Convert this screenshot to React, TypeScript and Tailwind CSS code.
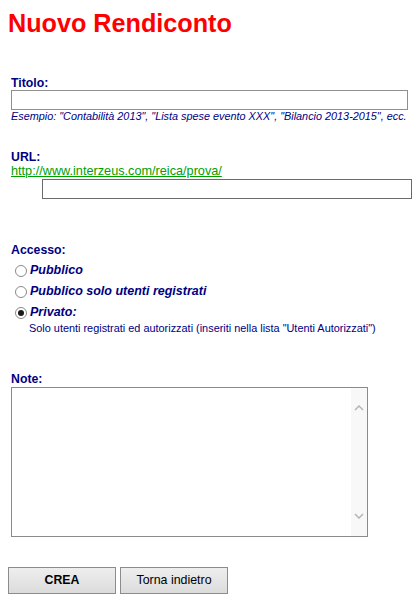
import React from "react";

function Radio({ checked }: { checked?: boolean }) {
  return (
    <span className="ml-[4px] mr-[3px] flex h-[12px] w-[12px] shrink-0 items-center justify-center rounded-full border border-[#8a8a8a] bg-white">
      {checked && <span className="h-[6px] w-[6px] rounded-full bg-[#1a1a1a]" />}
    </span>
  );
}

export default function App() {
  return (
    <div
      className="min-h-[611px] w-[420px] bg-white"
      style={{ fontFamily: '"Liberation Sans", Arial, sans-serif' }}
    >
      <h1 className="pl-[8px] pt-[9px] text-[25.2px] font-bold leading-[28px] text-[#ff0000]">
        Nuovo Rendiconto
      </h1>

      <div className="pl-[11px]">
        <div className="mt-[39px] text-[12.3px] font-bold leading-[14px] text-[#000080]">Titolo:</div>
        <input
          type="text"
          className="block h-[20px] w-[397px] border border-[#8f8f8f] bg-white outline-none"
        />
        <div className="text-[10.85px] italic leading-[13px] text-[#000080]">
          Esempio: "Contabilità 2013", "Lista spese evento XXX", "Bilancio 2013-2015", ecc.
        </div>

        <div className="mt-[27px] text-[12.3px] font-bold leading-[14px] text-[#000080]">URL:</div>
        <div className="text-[12.7px] leading-[14px] text-[#00a000] underline">
          http://www.interzeus.com/reica/prova/
        </div>
        <input
          type="text"
          className="ml-[31px] mt-[1px] block h-[20px] w-[370px] border border-[#6a6a6a] bg-white outline-none"
        />

        <div className="mt-[44px] text-[12.3px] font-bold leading-[14px] text-[#000080]">Accesso:</div>
        <div className="mt-[3px] flex h-[21px] items-center">
          <Radio />
          <span className="text-[12.5px] font-bold italic text-[#000080]">Pubblico</span>
        </div>
        <div className="flex h-[21px] items-center">
          <Radio />
          <span className="text-[12.5px] font-bold italic text-[#000080]">Pubblico solo utenti registrati</span>
        </div>
        <div className="flex h-[21px] items-center">
          <Radio checked />
          <span className="text-[12.5px] font-bold italic text-[#000080]">Privato:</span>
        </div>
        <div className="-mt-px ml-[18px] text-[10.9px] leading-[13px] text-[#000080]">
          Solo utenti registrati ed autorizzati (inseriti nella lista "Utenti Autorizzati")
        </div>

        <div className="mt-[37px] text-[12.3px] font-bold leading-[14px] text-[#000080]">Note:</div>
        <div className="mt-[1px] flex h-[150px] w-[357px] border border-[#8a8a8a] bg-white">
          <textarea className="h-full flex-1 resize-none border-0 bg-white outline-none" />
          <div className="flex w-[16px] flex-col items-center justify-between bg-[#f8f8f8] py-[17px]">
            <svg width="10" height="6" viewBox="0 0 10 6">
              <path d="M1 5 L5 1 L9 5" fill="none" stroke="#b5b5b5" strokeWidth="1.5" />
            </svg>
            <svg width="10" height="6" viewBox="0 0 10 6">
              <path d="M1 1 L5 5 L9 1" fill="none" stroke="#b5b5b5" strokeWidth="1.5" />
            </svg>
          </div>
        </div>

        <div className="-ml-[3px] mt-[30px] flex gap-[4px]">
          <button className="flex h-[27px] w-[108px] items-center justify-center border border-[#8c8c8c] bg-linear-to-b from-[#eeeeee] to-[#dcdcdc] text-[12.3px] font-bold text-black">
            CREA
          </button>
          <button className="flex h-[27px] w-[108px] items-center justify-center border border-[#8c8c8c] bg-linear-to-b from-[#eeeeee] to-[#dcdcdc] text-[12.4px] text-black">
            Torna indietro
          </button>
        </div>
      </div>
    </div>
  );
}
